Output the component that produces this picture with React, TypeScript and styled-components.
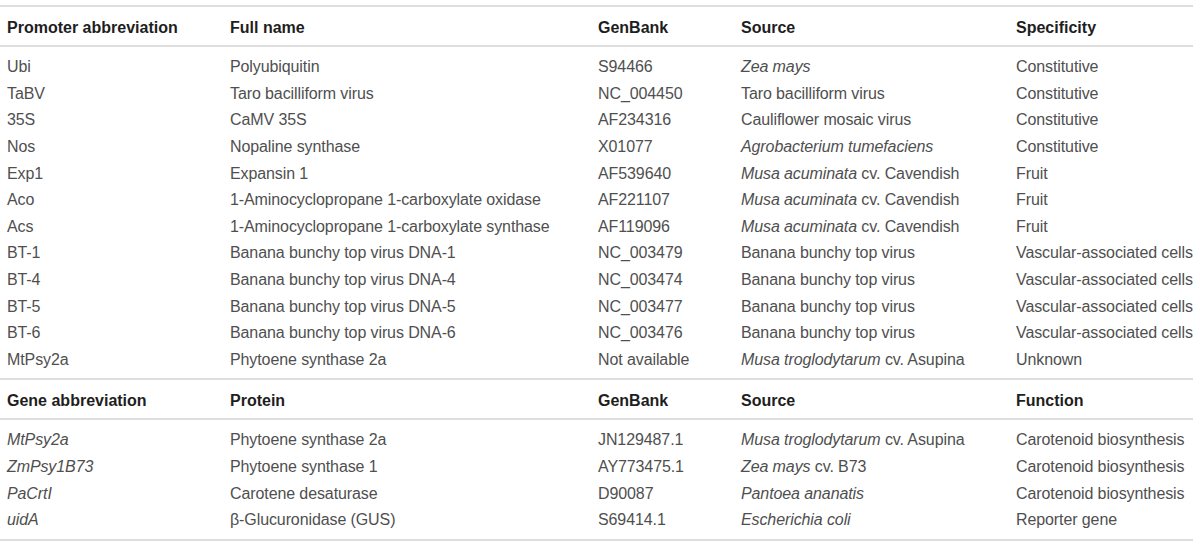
import React from "react";
import styled, { createGlobalStyle } from "styled-components";

const Global = createGlobalStyle`
  html, body { margin: 0; padding: 0; background: #fff; }
  body { font-family: "Liberation Sans", Arial, sans-serif; }
  *, *::before, *::after { box-sizing: border-box; }
`;

const Page = styled.div`
  width: 1193px;
  padding-top: 5px;
  overflow: hidden;
`;

const Section = styled.section`
  border-top: 2px solid #dedede;
`;

const Row = styled.div<{ $head?: boolean }>`
  display: grid;
  grid-template-columns: 223px 368px 143px 275px 1fr;
  padding-left: 7px;
  padding-top: ${(p) => (p.$head ? "4px" : "2px")};
  height: ${(p) => (p.$head ? "40px" : "26.6px")};
  align-items: center;
  font-size: 16px;
  letter-spacing: ${(p) => (p.$head ? "0" : "-0.1px")};
  white-space: nowrap;
  color: ${(p) => (p.$head ? "#1e1e1e" : "#4f4f4f")};
  font-weight: ${(p) => (p.$head ? 700 : 400)};
  border-bottom: ${(p) => (p.$head ? "2px solid #dedede" : "none")};
`;

const Body = styled.div`
  padding: 6px 0 6px;
`;

const Cell = styled.div`
  overflow: visible;
`;

type C = React.ReactNode;

const promoters: C[][] = [
  ["Ubi", "Polyubiquitin", "S94466", <i>Zea mays</i>, "Constitutive"],
  ["TaBV", "Taro bacilliform virus", "NC_004450", "Taro bacilliform virus", "Constitutive"],
  ["35S", "CaMV 35S", "AF234316", "Cauliflower mosaic virus", "Constitutive"],
  ["Nos", "Nopaline synthase", "X01077", <i>Agrobacterium tumefaciens</i>, "Constitutive"],
  ["Exp1", "Expansin 1", "AF539640", <><i>Musa acuminata</i> cv. Cavendish</>, "Fruit"],
  ["Aco", "1-Aminocyclopropane 1-carboxylate oxidase", "AF221107", <><i>Musa acuminata</i> cv. Cavendish</>, "Fruit"],
  ["Acs", "1-Aminocyclopropane 1-carboxylate synthase", "AF119096", <><i>Musa acuminata</i> cv. Cavendish</>, "Fruit"],
  ["BT-1", "Banana bunchy top virus DNA-1", "NC_003479", "Banana bunchy top virus", "Vascular-associated cells"],
  ["BT-4", "Banana bunchy top virus DNA-4", "NC_003474", "Banana bunchy top virus", "Vascular-associated cells"],
  ["BT-5", "Banana bunchy top virus DNA-5", "NC_003477", "Banana bunchy top virus", "Vascular-associated cells"],
  ["BT-6", "Banana bunchy top virus DNA-6", "NC_003476", "Banana bunchy top virus", "Vascular-associated cells"],
  ["MtPsy2a", "Phytoene synthase 2a", "Not available", <><i>Musa troglodytarum</i> cv. Asupina</>, "Unknown"],
];

const genes: C[][] = [
  [<i>MtPsy2a</i>, "Phytoene synthase 2a", "JN129487.1", <><i>Musa troglodytarum</i> cv. Asupina</>, "Carotenoid biosynthesis"],
  [<i>ZmPsy1B73</i>, "Phytoene synthase 1", "AY773475.1", <><i>Zea mays</i> cv. B73</>, "Carotenoid biosynthesis"],
  [<i>PaCrtI</i>, "Carotene desaturase", "D90087", <i>Pantoea ananatis</i>, "Carotenoid biosynthesis"],
  [<i>uidA</i>, "β-Glucuronidase (GUS)", "S69414.1", <i>Escherichia coli</i>, "Reporter gene"],
];

const TableSection = ({ head, rows }: { head: string[]; rows: C[][] }) => (
  <Section>
    <Row $head>
      {head.map((h, i) => (
        <Cell key={i}>{h}</Cell>
      ))}
    </Row>
    <Body>
      {rows.map((r, i) => (
        <Row key={i}>
          {r.map((c, j) => (
            <Cell key={j}>{c}</Cell>
          ))}
        </Row>
      ))}
    </Body>
  </Section>
);

const BottomRule = styled.div`
  border-top: 2px solid #dedede;
`;

export default function App() {
  return (
    <Page>
      <Global />
      <TableSection
        head={["Promoter abbreviation", "Full name", "GenBank", "Source", "Specificity"]}
        rows={promoters}
      />
      <TableSection
        head={["Gene abbreviation", "Protein", "GenBank", "Source", "Function"]}
        rows={genes}
      />
      <BottomRule />
    </Page>
  );
}
